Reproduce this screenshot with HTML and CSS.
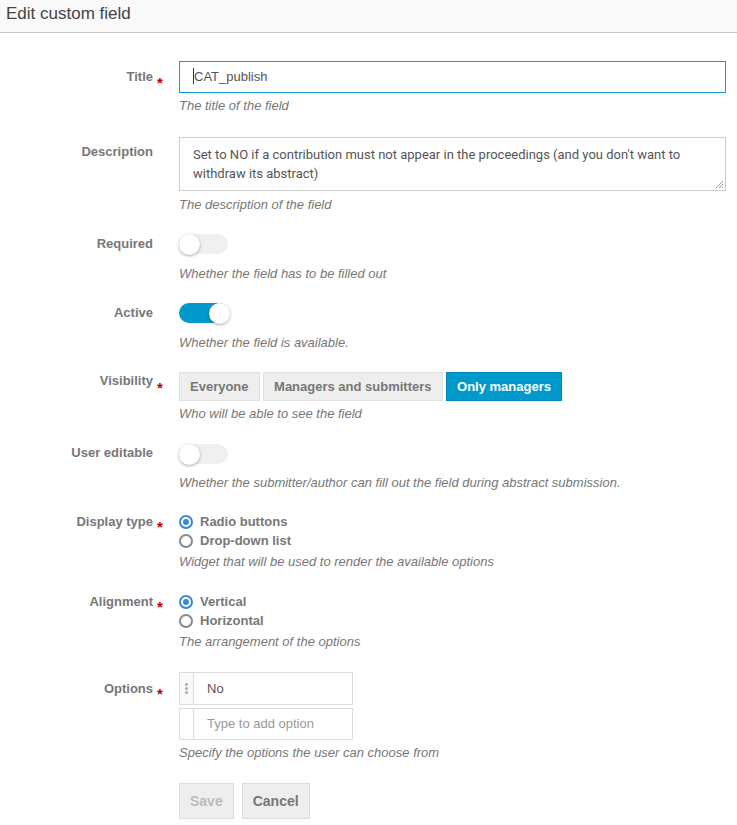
FILE: index.html
```html
<!DOCTYPE html>
<html>
<head>
<meta charset="utf-8">
<link rel="stylesheet" href="styles.css">
</head>
<body>
<div class="header">Edit custom field</div>
<form class="form">
  <div class="row r-title">
    <div class="label">Title</div><div class="star">*</div>
    <div class="field">
      <div class="input focused"><span class="caret"></span>CAT_publish</div>
      <div class="hint">The title of the field</div>
    </div>
  </div>
  <div class="row r-desc">
    <div class="label">Description</div><div class="star"></div>
    <div class="field">
      <div class="textarea">Set to NO if a contribution must not appear in the proceedings (and you don't want to withdraw its abstract)<svg class="grip" width="10" height="10" viewBox="0 0 10 10"><path d="M9 2L2 9M9 5L5 9M9 8L8 9" stroke="#999" stroke-width="1"/></svg></div>
      <div class="hint">The description of the field</div>
    </div>
  </div>
  <div class="row r-toggle">
    <div class="label">Required</div><div class="star"></div>
    <div class="field">
      <div class="tbox"><span class="toggle"><span class="knob"></span></span></div>
      <div class="hint">Whether the field has to be filled out</div>
    </div>
  </div>
  <div class="row r-toggle">
    <div class="label">Active</div><div class="star"></div>
    <div class="field">
      <div class="tbox"><span class="toggle on"><span class="knob"></span></span></div>
      <div class="hint">Whether the field is available.</div>
    </div>
  </div>
  <div class="row r-vis">
    <div class="label">Visibility</div><div class="star">*</div>
    <div class="field">
      <div class="btngroup">
        <span class="btn">Everyone</span>
        <span class="btn">Managers and submitters</span>
        <span class="btn active">Only managers</span>
      </div>
      <div class="hint">Who will be able to see the field</div>
    </div>
  </div>
  <div class="row r-toggle r-ue">
    <div class="label">User editable</div><div class="star"></div>
    <div class="field">
      <div class="tbox"><span class="toggle"><span class="knob"></span></span></div>
      <div class="hint">Whether the submitter/author can fill out the field during abstract submission.</div>
    </div>
  </div>
  <div class="row r-radio">
    <div class="label">Display type</div><div class="star">*</div>
    <div class="field">
      <div class="radio"><span class="rb checked"></span>Radio buttons</div>
      <div class="radio"><span class="rb"></span>Drop-down list</div>
      <div class="hint">Widget that will be used to render the available options</div>
    </div>
  </div>
  <div class="row r-radio r-align">
    <div class="label">Alignment</div><div class="star">*</div>
    <div class="field">
      <div class="radio"><span class="rb checked"></span>Vertical</div>
      <div class="radio"><span class="rb"></span>Horizontal</div>
      <div class="hint">The arrangement of the options</div>
    </div>
  </div>
  <div class="row r-opts">
    <div class="label">Options</div><div class="star">*</div>
    <div class="field">
      <div class="opt"><span class="handle"><i></i><i></i><i></i></span><span class="otext">No</span></div>
      <div class="opt second"><span class="handle"></span><span class="otext ph">Type to add option</span></div>
      <div class="hint">Specify the options the user can choose from</div>
    </div>
  </div>
  <div class="row r-actions">
    <div class="label"></div><div class="star"></div>
    <div class="field actions">
      <span class="abtn disabled">Save</span>
      <span class="abtn">Cancel</span>
    </div>
  </div>
</form>
</body>
</html>
```

FILE: styles.css
```css
* { box-sizing: border-box; }
html, body { margin: 0; padding: 0; background: #fff; }
body {
  font-family: "Liberation Sans", Arial, sans-serif;
  font-size: 13px;
  color: #777;
  width: 737px;
  height: 825px;
  overflow: hidden;
}
.header {
  height: 33px;
  background: #f9f9f9;
  border-bottom: 1px solid #c8c8c8;
  padding: 3px 0 0 6px;
  font-size: 17px;
  color: #444;
  line-height: 22px;
}
.form { padding-top: 28px; }
.row { display: flex; margin-bottom: 21px; }
.label {
  width: 153px;
  flex: none;
  text-align: right;
  font-weight: bold;
  color: #777;
  line-height: 16px;
}
.star {
  width: 26px;
  flex: none;
  color: #c40000;
  font-weight: bold;
  font-size: 15px;
  line-height: 16px;
  padding-left: 4px;
}
.field { width: 547px; flex: none; }
.hint {
  font-style: italic;
  color: #777;
  line-height: 16px;
  margin-top: 5px;
}
/* title */
.r-title .label { padding-top: 8px; }
.r-title .star { padding-top: 14px; }
.r-title { margin-bottom: 23px; }
.input {
  height: 32px;
  border: 1px solid #0e9fd0;
  padding: 0 12px 0 13px;
  line-height: 30px;
  color: #555;
  position: relative;
}
.caret {
  display: inline-block;
  width: 1px;
  height: 16px;
  background: #333;
  vertical-align: -3px;
}
/* description */
.r-desc .label { padding-top: 7px; }
.textarea {
  height: 54px;
  border: 1px solid #ccc;
  padding: 7px 13px;
  line-height: 19px;
  color: #555;
  font-family: Roboto, "Liberation Sans", sans-serif;
  font-size: 13px;
  position: relative;
}
.grip { position: absolute; right: 1px; bottom: 1px; }
.r-desc .hint { margin-top: 6px; }
/* toggles */
.r-toggle .label { padding-top: 2px; }
.tbox { height: 26px; padding-top: 0; }
.toggle {
  display: block;
  position: relative;
  width: 49px;
  height: 20px;
  border-radius: 10px;
  background: #f0f0f0;
}
.toggle.on { background: #0099cc; width: 50px; }
.knob {
  position: absolute;
  top: -0.5px;
  left: 0;
  width: 21px;
  height: 21px;
  border-radius: 50%;
  background: #fff;
  box-shadow: 0 1px 3px rgba(0,0,0,0.35);
}
.toggle.on .knob { left: auto; right: -1px; }
.r-toggle .hint { margin-top: 6px; }
.r-ue .label { padding-top: 1px; }
.r-ue .hint { margin-top: 5px; }
/* visibility */
.r-vis .label { padding-top: 1px; }
.r-vis .star { padding-top: 8px; }
.r-vis { margin-bottom: 22px; }
.btngroup { display: flex; gap: 3px; height: 29px; }
.btn {
  display: block;
  height: 29px;
  line-height: 27px;
  padding: 0 10.5px 0 10px;
  background: #eee;
  border: 1px solid #e0e0e0;
  font-weight: bold;
  color: #777;
}
.btn.active { background: #0099cc; border-color: #0088bb; color: #fff; }
.r-vis .hint { margin-top: 5px; }
/* radios */
.r-radio { margin-bottom: 22px; }
.r-radio .label { padding-top: 2px; }
.r-radio .star { padding-top: 7px; }
.radio {
  display: flex;
  align-items: center;
  height: 19px;
  font-weight: bold;
  color: #777;
}
.rb {
  width: 14px;
  height: 14px;
  border-radius: 50%;
  border: 2px solid #8a8a95;
  margin-right: 7px;
  margin-top: 1px;
  background: #fff;
  position: relative;
}
.rb.checked { border-color: #3a86e0; }
.rb.checked::after {
  content: "";
  position: absolute;
  left: 2px; top: 2px;
  width: 6px; height: 6px;
  border-radius: 50%;
  background: #3a86e0;
}
.r-radio .hint { margin-top: 4px; }
/* options */
.r-opts .label { padding-top: 9px; }
.r-opts .star { padding-top: 14px; }
.r-opts { margin-bottom: 22px; }
.opt {
  display: flex;
  width: 174px;
  height: 33px;
  border: 1px solid #ddd;
}
.opt.second { height: 32px; margin-top: 3px; }
.handle {
  width: 14px;
  flex: none;
  border-right: 1px solid #ddd;
  background: #fafafa;
  display: flex;
  flex-direction: column;
  align-items: center;
  justify-content: center;
  gap: 1px;
}
.opt.second .handle { background: #fff; }
.handle i { display: block; width: 3px; height: 3px; border-radius: 50%; background: #aaa; }
.otext { line-height: 31px; padding-left: 13px; color: #555; }
.otext.ph { color: #999; line-height: 30px; }
.r-opts .hint { margin-top: 5px; }
/* actions */
.actions { display: flex; gap: 8px; }
.abtn {
  display: block;
  height: 36px;
  line-height: 34px;
  padding: 0 10px;
  background: #eee;
  border: 1px solid #ddd;
  font-weight: bold;
  font-size: 14px;
  color: #777;
}
.abtn.disabled { color: #bbb; line-height: 35px; }
```
